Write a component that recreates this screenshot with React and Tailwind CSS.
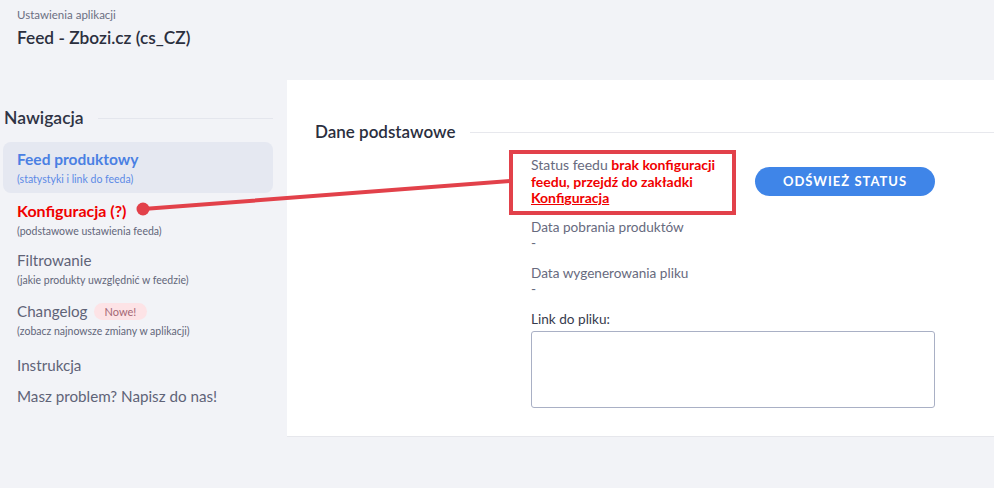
import React from "react";

const font = { fontFamily: "Lato, 'Open Sans', sans-serif" };

const NavItem = ({ title, sub, active, danger, badge, className = "" }) => (
  <div className={`rounded-lg px-[14px] ${active ? "bg-[#e5e8f1]" : ""} ${className}`}>
    <div
      className={`flex items-center leading-[20px] ${
        active
          ? "text-[15.5px] font-bold text-[#4a80e3]"
          : danger
          ? "text-[16px] font-bold text-[#f00000]"
          : "text-[15.2px] text-[#5f6377]"
      }`}
    >
      {title}
      {badge && (
        <span className="ml-[6px] rounded-full bg-[#fde3e6] px-[11px] text-[11px] leading-[17px] text-[#a46775]">
          {badge}
        </span>
      )}
    </div>
    {sub && (
      <div
        className={`mt-[3px] text-[10.5px] leading-[14px] ${active ? "text-[#5c8ae6]" : "text-[#62667a]"}`}
      >
        {sub}
      </div>
    )}
  </div>
);

export default function App() {
  return (
    <div className="relative min-h-[488px] w-[994px] bg-[#f2f3f7]" style={font}>
      {/* header */}
      <div className="h-[80px] px-[17px] pt-[7px]">
        <div className="text-[11.5px] leading-[16px] text-[#6c6f82]">Ustawienia aplikacji</div>
        <div className="mt-[3px] text-[17.3px] font-semibold leading-[24px] text-[#2b2f3e]">
          Feed - Zbozi.cz (cs_CZ)
        </div>
      </div>

      <div className="flex">
        {/* sidebar */}
        <aside className="w-[287px] shrink-0 pr-[14px] pt-[26px]">
          <div className="flex items-center pl-[4px]">
            <span className="text-[17.5px] font-semibold leading-[24px] text-[#2f3344]">Nawigacja</span>
            <div className="ml-[14px] h-px flex-1 bg-[#e4e6ed]" />
          </div>
          <div className="ml-[3px] mt-[12px] flex flex-col">
            <NavItem active title="Feed produktowy" sub="(statystyki i link do feeda)" className="py-[7px]" />
            <NavItem danger title="Konfiguracja (?)" sub="(podstawowe ustawienia feeda)" className="mt-px py-[7px]" />
            <NavItem title="Filtrowanie" sub="(jakie produkty uwzględnić w feedzie)" className="pb-[7px] pt-[5px]" />
            <NavItem
              title="Changelog"
              badge="Nowe!"
              sub="(zobacz najnowsze zmiany w aplikacji)"
              className="pb-[10px] pt-[7px]"
            />
            <NavItem title="Instrukcja" className="pb-[5px] pt-[7px]" />
            <NavItem title="Masz problem? Napisz do nas!" className="py-[6px]" />
          </div>
        </aside>

        {/* main panel */}
        <main className="h-[357px] flex-1 border-b border-[#e6e7ec] bg-white pl-[28px] pt-[41px]">
          <div className="flex items-center">
            <span className="text-[17px] font-semibold leading-[22px] text-[#2b2f3e]">Dane podstawowe</span>
            <div className="ml-[15px] h-px flex-1 bg-[#e7e8ed]" />
          </div>

          <div className="ml-[216px] mt-[14px] w-[404px]">
            <div className="flex items-start">
              <div className="relative w-[196px] text-[14px] leading-[16.7px] text-[#676a7e]">
                <div className="pointer-events-none absolute -bottom-[8px] -left-[22px] -right-[9px] -top-[7px] border-[4px] border-[#e2414a]" />
                Status feedu{" "}
                <span className="font-bold text-[#f00000]">
                  brak konfiguracji feedu, przejdź do zakładki{" "}
                  <span className="underline">Konfiguracja</span>
                </span>
              </div>
              <button className="ml-auto mt-[10px] h-[29px] w-[180px] rounded-full bg-[#3f85e8] text-[13px] font-bold tracking-[1px] text-white">
                ODŚWIEŻ STATUS
              </button>
            </div>

            <div className="mt-[12px] text-[13.6px] leading-[16px] text-[#676a7e]">
              <div>Data pobrania produktów</div>
              <div>-</div>
              <div className="mt-[14px]">Data wygenerowania pliku</div>
              <div>-</div>
              <div className="mt-[14px] text-[#373b4d]">Link do pliku:</div>
            </div>
            <textarea className="mt-[4px] block h-[77px] w-[404px] resize-none rounded-[3px] border border-[#a9b0c5] bg-white" />
          </div>
        </main>
      </div>

      {/* annotation arrow */}
      <svg className="pointer-events-none absolute left-0 top-0" width="994" height="488">
        <line x1="143" y1="209" x2="511" y2="181" stroke="#e2414a" strokeWidth="4" strokeLinecap="round" />
        <circle cx="143" cy="209" r="6.5" fill="#e2414a" />
      </svg>
    </div>
  );
}
